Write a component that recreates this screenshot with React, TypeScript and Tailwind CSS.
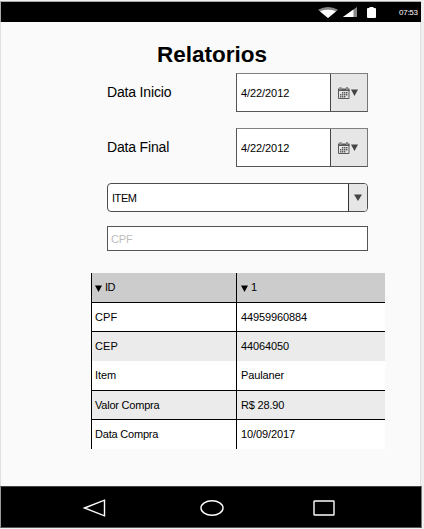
import React from 'react';

const label = 'whitespace-pre text-[11px] leading-[14px]';

function Caret({ className = '', size = 8 }: { className?: string; size?: number }) {
  return (
    <svg width={size} height="7" viewBox="0 0 8 7" preserveAspectRatio="none" className={`shrink-0 ${className}`}>
      <path d="M0 0.5h8L4 7z" fill="currentColor" />
    </svg>
  );
}

function CalendarIcon() {
  return (
    <svg width="12" height="12" viewBox="0 0 12 12" className="shrink-0 text-[#595959]">
      <path d="M.5 2.5h10.5v9H.5z" fill="#e6e6e6" stroke="currentColor" />
      <path d="M0 1.5h11.5v2.5H0z" fill="currentColor" />
      <path d="M1.5 0h2v3h-2zM8 0h2v3H8z" fill="#8a8a8a" />
      <path
        d="M4 5h1.4v1.4H4zM6 5h1.4v1.4H6zM8 5h1.4v1.4H8zM2 7h1.4v1.4H2zM4 7h1.4v1.4H4zM6 7h1.4v1.4H6zM8 7h1.4v1.4H8zM2 9h1.4v1.4H2zM4 9h1.4v1.4H4zM6 9h1.4v1.4H6z"
        fill="currentColor"
      />
    </svg>
  );
}

function DateRow({ title }: { title: string }) {
  return (
    <div className="flex h-[39px] w-[261px] items-center">
      <span className="w-[129px] pb-[2px] text-[14px] leading-4 tracking-[-0.17px]">{title}</span>
      <div className="flex h-[39px] w-[132px] border border-t-[#808080] border-r-[#777] border-b-[#555] border-l-[#555] bg-white">
        <div className="flex w-[93px] items-center pl-1">
          <span className={`${label} tracking-[-0.08px]`}>4/22/2012</span>
        </div>
        <div className="flex flex-1 items-center border-l border-[#444] bg-[#e6e6e6] pl-[7px]">
          <CalendarIcon />
          <Caret className="ml-px text-[#444]" size={7} />
        </div>
      </div>
    </div>
  );
}

type Row = { name: string; value: string; row: string; cell: string; track: string; valueTrack: string };

const rows: Row[] = [
  { name: 'CPF', value: '44959960884', row: 'h-[29px] border-b bg-white', cell: '', track: 'tracking-[0.1px]', valueTrack: 'tracking-[-0.12px]' },
  { name: 'CEP', value: '44064050', row: 'h-[29px] bg-[#ebebeb]', cell: 'pb-[2px]', track: 'tracking-[0.15px]', valueTrack: 'tracking-[-0.12px]' },
  { name: 'Item', value: 'Paulaner', row: 'h-[30px] border-b bg-white', cell: 'pb-[2px]', track: 'tracking-[-0.1px]', valueTrack: 'tracking-[-0.12px]' },
  { name: 'Valor Compra', value: 'R$ 28.90', row: 'h-[29px] border-b bg-[#ebebeb]', cell: '', track: 'tracking-[-0.22px]', valueTrack: 'tracking-[-0.18px]' },
  { name: 'Data Compra', value: '10/09/2017', row: 'h-[29px] bg-white', cell: 'pb-[2px]', track: 'tracking-[-0.2px]', valueTrack: 'tracking-[-0.1px]' },
];

function StatusBar() {
  return (
    <header className="flex h-[21px] w-[421px] items-center border-t border-l border-[#aaa] bg-black pl-[317px] text-white">
      <svg width="20" height="11" viewBox="0 0 20 11">
        <path d="M0 2.8Q10-2.8 20 2.8L10 11z" fill="#888" />
        <path d="M2 4.2Q10 1.4 18 4.2L10 11z" fill="white" />
      </svg>
      <svg width="14" height="10" viewBox="0 0 14 10" className="ml-[5px]">
        <path d="M0 10L14 0v10z" fill="#888" />
        <path d="M0 10L10.5 2.5V10z" fill="white" />
      </svg>
      <svg width="9" height="11" viewBox="0 0 9 11" className="ml-[10px]">
        <path d="M2.5 0h4v1H8q1 0 1 1v8q0 1-1 1H1q-1 0-1-1V2q0-1 1-1h1.5z" fill="white" />
      </svg>
      <span className="mt-px ml-[23px] text-[8px] leading-[10px] tracking-[-0.25px]">07:53</span>
    </header>
  );
}

function NavigationBar() {
  return (
    <nav className="flex h-[42px] w-[422px] items-center border border-t-[#444] border-r-[#777] border-b-[#555] border-l-[#999] bg-black pt-[2px] pl-[81px]">
      <svg width="24" height="18" viewBox="0 0 24 18" fill="none" stroke="white" strokeWidth="1.4">
        <path d="M2.5 9L22.5 1.2v15.6z" />
      </svg>
      <svg width="24" height="17" viewBox="0 0 24 17" className="ml-[94px]" fill="none" stroke="white" strokeWidth="1.4">
        <ellipse cx="12" cy="8" rx="11" ry="7.3" />
      </svg>
      <svg width="22" height="16" viewBox="0 0 22 16" className="ml-[89px]" fill="none" stroke="white" strokeWidth="1.4">
        <rect x="1" y="1" width="20" height="14" rx="0.5" />
      </svg>
    </nav>
  );
}

export default function App() {
  return (
    <div className="h-[529px] w-[424px] overflow-hidden bg-[#f0f0f0] pt-px font-['Liberation_Sans',Arial,sans-serif] text-black">
      <StatusBar />
      <main className="h-[464px] w-[421px] border-r border-l border-[#e0e0e0] bg-[#fafafa]">
        <h1 className="ml-[156px] pt-[20px] text-[22.5px] leading-[26px] font-bold">Relatorios</h1>
        <form className="mt-[5px] ml-[106px] flex flex-col">
          <DateRow title="Data Inicio" />
          <div className="mt-4">
            <DateRow title="Data Final" />
          </div>
          <div className="mt-4 flex h-[29px] w-[261px] overflow-hidden rounded-[4px] border border-[#4d4d4d] bg-white">
            <div className="flex w-[240px] items-center pl-1">
              <span className={`${label} tracking-[-0.45px]`}>ITEM</span>
            </div>
            <div className="flex flex-1 items-center border-l border-[#333] bg-[#e6e6e6] pl-[5px]">
              <Caret className="text-[#444]" />
            </div>
          </div>
          <div className="mt-[14px] flex h-[25px] w-[261px] items-center border border-[#555] bg-white pl-[3px]">
            <span className={`${label} tracking-[-0.1px] text-[#bdbdbd]`}>CPF</span>
          </div>
        </form>
        <table className="mt-[22px] ml-[90px] block w-[294px]">
          <thead className="block">
            <tr className="flex h-[30px] border-b border-black bg-[#ccc]">
              <th className="flex w-[145px] items-center border-l border-black pl-[3px] font-normal">
                <Caret className="mt-[2px]" size={7} />
                <span className={`${label} mb-px ml-[3px] tracking-[-0.5px]`}>ID</span>
              </th>
              <th className="flex w-[149px] items-center border-l border-black pl-[4px] font-normal">
                <Caret className="mt-[2px]" size={7} />
                <span className={`${label} mb-px ml-[3px]`}>1</span>
              </th>
            </tr>
          </thead>
          <tbody className="block">
            {rows.map((r) => (
              <tr key={r.name} className={`flex border-black ${r.row}`}>
                <td className={`flex w-[145px] items-center border-l border-black pl-[3px] ${r.cell}`}>
                  <span className={`${label} ${r.track}`}>{r.name}</span>
                </td>
                <td className={`flex w-[149px] items-center border-l border-black pl-1 ${r.cell}`}>
                  <span className={`${label} ${r.valueTrack}`}>{r.value}</span>
                </td>
              </tr>
            ))}
          </tbody>
        </table>
      </main>
      <NavigationBar />
    </div>
  );
}
